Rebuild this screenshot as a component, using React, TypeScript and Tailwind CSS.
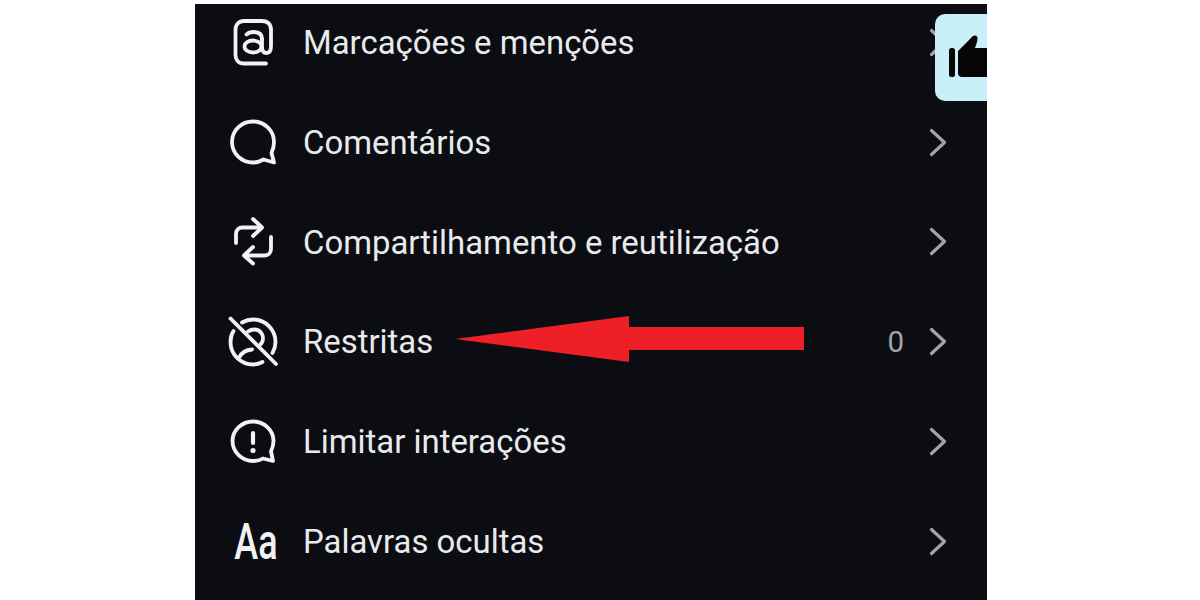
const Chevron = () => (
  <svg width="20" height="30" viewBox="0 0 20 30" fill="none" stroke="#a3a4a6" strokeWidth="3.2" strokeLinecap="round" strokeLinejoin="round">
    <path d="M4.5 2.5 L17.5 14.5 L4.5 26.5" />
  </svg>
);

const iconProps = {
  width: 52,
  height: 52,
  viewBox: "0 0 52 52",
  fill: "none",
  stroke: "#f1f2f3",
  strokeWidth: 3.8,
  strokeLinecap: "round" as const,
  strokeLinejoin: "round" as const,
};

const AtIcon = () => (
  <svg {...iconProps}>
    <path d="M39 46.5 H17 C11.5 46.5 8.5 43 8.5 38 V13 C8.5 7.5 12 4 17 4 H35 C41 4 44 7.5 44 13 V29 C44 34 42.5 36 39.5 36 C36.5 36 35 34 35 30 V22" />
    <path d="M19.5 17.5 C21.5 15.5 24 15 26.5 15 C32 15 35 17.5 35 22" />
    <ellipse cx="26" cy="29.5" rx="8.5" ry="6" />
  </svg>
);

const CommentIcon = () => (
  <svg {...iconProps}>
    <path d="M47 45.5 L36.5 42.5 C33 44.5 29.5 45.5 26 45.5 C14 45.5 5 36 5 25 C5 13.5 14.5 4.5 26 4.5 C37.5 4.5 47 13.5 47 25 C47 29 46 32.5 44.5 36 Z" />
  </svg>
);

const RepostIcon = () => (
  <svg {...iconProps}>
    <path d="M9 27 V18 C9 14 11.5 11.5 15.5 11.5 H34" />
    <path d="M26 3 L35 11.5 L26 20" />
    <path d="M44 21 V33 C44 37 41.5 39.5 37.5 39.5 H18" />
    <path d="M26 31 L17 39.5 L26 47.5" />
  </svg>
);

const RestrictIcon = () => (
  <svg {...iconProps}>
    <path d="M15 6.5 C18.5 4.5 22.5 3.5 26 3.5 C38.5 3.5 48.5 13.5 48.5 26 C48.5 30 47.5 33.5 45.5 37" />
    <path d="M35.5 46 C32.5 47.5 29.5 48.5 26 48.5 C13.5 48.5 3.5 38.5 3.5 26 C3.5 22 4.5 18 6.5 15" />
    <path d="M3.5 2.5 L49 48" />
    <path d="M21 15.5 C23 14 25 13.5 27.5 13.5 C32.5 13.5 36 17.5 36 22 C36 25.5 34.5 28 32 30" />
    <path d="M12.5 41 C14.5 37 19 34 25 33.5" />
  </svg>
);

const LimitIcon = () => (
  <svg {...iconProps}>
    <path d="M46 45 L36 42.5 C33 44.5 29.5 45 26 45 C15 45 5.5 36 5.5 25 C5.5 14 15 5.5 26 5.5 C37 5.5 46.5 14 46.5 25 C46.5 29 45.5 32 44 35.5 Z" />
    <path d="M26 17 V27" strokeWidth="4.2" />
    <circle cx="26" cy="34.5" r="2.6" fill="#f1f2f3" stroke="none" />
  </svg>
);

const rows = [
  { label: "Marcações e menções", icon: <AtIcon /> },
  { label: "Comentários", icon: <CommentIcon /> },
  { label: "Compartilhamento e reutilização", icon: <RepostIcon /> },
  { label: "Restritas", icon: <RestrictIcon />, count: "0" },
  { label: "Limitar interações", icon: <LimitIcon /> },
  {
    label: "Palavras ocultas",
    icon: (
      <span className="block w-[52px] scale-x-[0.72] text-center text-[50px] font-medium leading-[52px] text-[#f1f2f3]">
        Aa
      </span>
    ),
  },
];

export default function App() {
  return (
    <div className="h-[600px] w-[1200px] overflow-hidden bg-white pt-1 font-['Roboto',sans-serif]">
      <div className="relative ml-[195px] h-[596px] w-[792px] overflow-hidden bg-[#0b0d13]">
        <div className="flex -translate-y-[11px] flex-col">
          {rows.map((row) => (
            <div key={row.label} className="flex h-[99.8px] items-center pl-[32px] pr-[40px]">
              <div className="flex w-[76px] shrink-0 items-center">{row.icon}</div>
              <span className="flex-1 whitespace-nowrap pt-px text-[32.9px] leading-none text-[#e9eaeb]">{row.label}</span>
              {row.count && <span className="mr-[23px] text-[29.5px] leading-none text-[#a3a4a6]">{row.count}</span>}
              <Chevron />
            </div>
          ))}
        </div>

        <div className="absolute left-[740px] top-[10px] flex h-[87px] w-[52px] items-center overflow-hidden rounded-l-[10px] bg-[#c9eff9] pl-[14px]">
          <svg width="46" height="46" viewBox="0 0 46 46" className="shrink-0" fill="#050505">
            <rect x="0" y="13" width="6" height="29" rx="2.5" />
            <path d="M9 16 L22 3 C24 0.5 26 0 27.5 1 C29 2 28.5 4.5 28 7 L26 13 H46 V42 H13 C10.5 42 9 40.5 9 38 Z" />
          </svg>
        </div>

        <svg className="absolute left-[260px] top-[312px]" width="350" height="46" viewBox="-2 0 350 46" fill="#ee1f27">
          <path d="M-2 23 L172 0 V11 H347 V34 H172 V46 Z" />
        </svg>
      </div>
    </div>
  );
}
